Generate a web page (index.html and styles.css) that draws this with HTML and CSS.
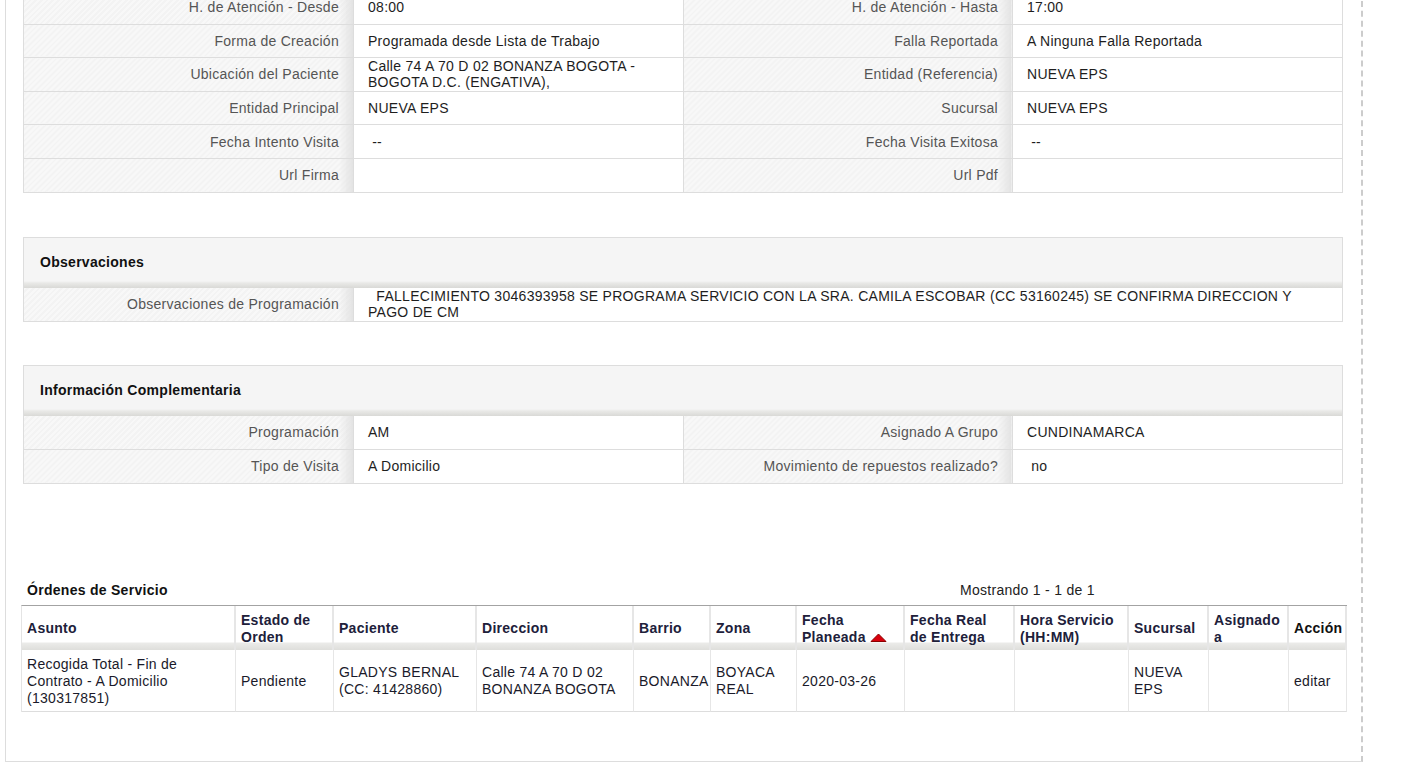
FILE: index.html
```html
<!DOCTYPE html>
<html lang="es">
<head>
    <meta charset="UTF-8">
    <title>Detalle de Visita</title>
    <link rel="stylesheet" href="styles.css">
</head>
<body>
    <div class="panel">
        <div class="box box-top">
            <table class="detail detail-main">
                <tr>
                    <th>H. de Atención - Desde</th><td>08:00</td>
                    <th>H. de Atención - Hasta</th><td>17:00</td>
                </tr>
                <tr>
                    <th>Forma de Creación</th><td>Programada desde Lista de Trabajo</td>
                    <th>Falla Reportada</th><td>A Ninguna Falla Reportada</td>
                </tr>
                <tr>
                    <th>Ubicación del Paciente</th><td>Calle 74 A 70 D 02 BONANZA BOGOTA - BOGOTA D.C. (ENGATIVA),</td>
                    <th>Entidad (Referencia)</th><td>NUEVA EPS</td>
                </tr>
                <tr>
                    <th>Entidad Principal</th><td>NUEVA EPS</td>
                    <th>Sucursal</th><td>NUEVA EPS</td>
                </tr>
                <tr>
                    <th>Fecha Intento Visita</th><td>&nbsp;--</td>
                    <th>Fecha Visita Exitosa</th><td>&nbsp;--</td>
                </tr>
                <tr>
                    <th>Url Firma</th><td></td>
                    <th>Url Pdf</th><td></td>
                </tr>
            </table>
        </div>

        <div class="box">
            <div class="box-head">Observaciones</div>
            <table class="detail">
                <tr>
                    <th>Observaciones de Programación</th>
                    <td colspan="3">&nbsp; FALLECIMIENTO 3046393958 SE PROGRAMA SERVICIO CON LA SRA. CAMILA ESCOBAR (CC 53160245) SE CONFIRMA DIRECCION Y PAGO DE CM</td>
                </tr>
            </table>
        </div>

        <div class="box box-info">
            <div class="box-head">Información Complementaria</div>
            <table class="detail">
                <tr>
                    <th>Programación</th><td>AM</td>
                    <th>Asignado A Grupo</th><td>CUNDINAMARCA</td>
                </tr>
                <tr>
                    <th>Tipo de Visita</th><td>A Domicilio</td>
                    <th>Movimiento de repuestos realizado?</th><td>&nbsp;no</td>
                </tr>
            </table>
        </div>

        <div class="orders">
            <div class="orders-bar">
                <span class="orders-title">Órdenes de Servicio</span>
                <span class="pager">Mostrando 1 - 1 de 1</span>
            </div>
            <table class="grid">
                <colgroup>
                    <col style="width:214px"><col style="width:98px"><col style="width:143px">
                    <col style="width:157px"><col style="width:77px"><col style="width:86px">
                    <col style="width:108px"><col style="width:110px"><col style="width:114px">
                    <col style="width:80px"><col style="width:80px"><col style="width:58px">
                </colgroup>
                <thead>
                    <tr>
                        <th>Asunto</th>
                        <th>Estado de Orden</th>
                        <th>Paciente</th>
                        <th>Direccion</th>
                        <th>Barrio</th>
                        <th>Zona</th>
                        <th>Fecha<br>Planeada <svg class="sort-up" width="17" height="9" viewBox="0 0 17 9"><polygon points="1,8.5 8.5,1 16,8.5" fill="#d8000c" stroke="#8a0000" stroke-width="1"/></svg></th>
                        <th>Fecha Real de Entrega</th>
                        <th>Hora Servicio (HH:MM)</th>
                        <th>Sucursal</th>
                        <th>Asignado a</th>
                        <th class="action">Acción</th>
                    </tr>
                </thead>
                <tbody>
                    <tr>
                        <td>Recogida Total - Fin de Contrato - A Domicilio (130317851)</td>
                        <td>Pendiente</td>
                        <td>GLADYS BERNAL (CC: 41428860)</td>
                        <td>Calle 74 A 70 D 02 BONANZA BOGOTA</td>
                        <td>BONANZA</td>
                        <td>BOYACA REAL</td>
                        <td>2020-03-26</td>
                        <td></td>
                        <td></td>
                        <td>NUEVA EPS</td>
                        <td></td>
                        <td>editar</td>
                    </tr>
                </tbody>
            </table>
        </div>
    </div>
</body>
</html>
```

FILE: styles.css
```css
body {
    margin: 0;
    font-family: "Liberation Sans", Arial, sans-serif;
    font-size: 14px;
    letter-spacing: 0.28px;
    color: #222;
    background-color: #ffffff;
}
.panel {
    width: 1355px;
    margin: -9px 0 0 5px;
    padding-bottom: 49px;
    border-left: 1px solid #dddddd;
    border-bottom: 1px solid #dddddd;
    border-right: 2px dashed #cccccc;
}
.box {
    width: 1318px;
    margin: 44px 0 0 17px;
    border: 1px solid #dddddd;
}
.box-top {
    margin-top: 0;
    border-top: none;
}
.box-info {
    margin-top: 43px;
}
.box-head {
    height: 50px;
    padding-left: 16px;
    line-height: 48px;
    font-weight: bold;
    color: #111;
    background: linear-gradient(to bottom, #f5f5f5 0, #f5f5f5 43px, #e9e9e7 45px, #d9d9d6 50px);
}
.detail {
    width: 100%;
    table-layout: fixed;
    border-collapse: collapse;
    border-style: hidden;
}
.detail th,
.detail td {
    height: 33px;
    padding: 0 14px;
    line-height: 16px;
    border: 1px solid #dddddd;
    vertical-align: middle;
}
.detail-main th,
.detail-main td {
    height: 32.6px;
}
.detail th {
    width: 25%;
    box-sizing: border-box;
    text-align: right;
    font-weight: normal;
    color: #555555;
    background:
        linear-gradient(to left, #e3e3e3 0, rgba(227, 227, 227, 0) 14px),
        repeating-linear-gradient(-45deg, #f3f3f3 0, #f3f3f3 2px, #f8f8f8 2px, #f8f8f8 4px);
}
.detail td {
    color: #1e1e1e;
    background-color: #ffffff;
}
.orders {
    width: 1325px;
    margin: 98px 0 0 15px;
}
.orders-bar {
    display: grid;
    grid-template-columns: 933px 1fr;
    padding: 0 0 6px 6px;
    line-height: 17px;
}
.orders-title {
    font-weight: bold;
    color: #111;
}
.grid {
    width: 100%;
    table-layout: fixed;
    border-collapse: separate;
    border-spacing: 0;
    border-top: 1px solid #a3a3a3;
    border-left: 1px solid #e4e4e4;
}
.grid th {
    height: 34px;
    padding: 6px 7px 4px 5px;
    line-height: 17px;
    text-align: left;
    vertical-align: middle;
    color: #20203a;
    border-right: 2px solid #e6e6e6;
    background: linear-gradient(to bottom, #ffffff 0, #ffffff 36px, #ebebe9 37px, #dededb 44px);
}
.grid th.action {
    color: #111;
}
.grid td {
    padding: 6px 5px 4px;
    line-height: 17px;
    vertical-align: middle;
    color: #1a1a2a;
    border-right: 1px solid #e6e6e6;
    border-bottom: 1px solid #dddddd;
}
.sort-up {
    vertical-align: 0;
}
```
